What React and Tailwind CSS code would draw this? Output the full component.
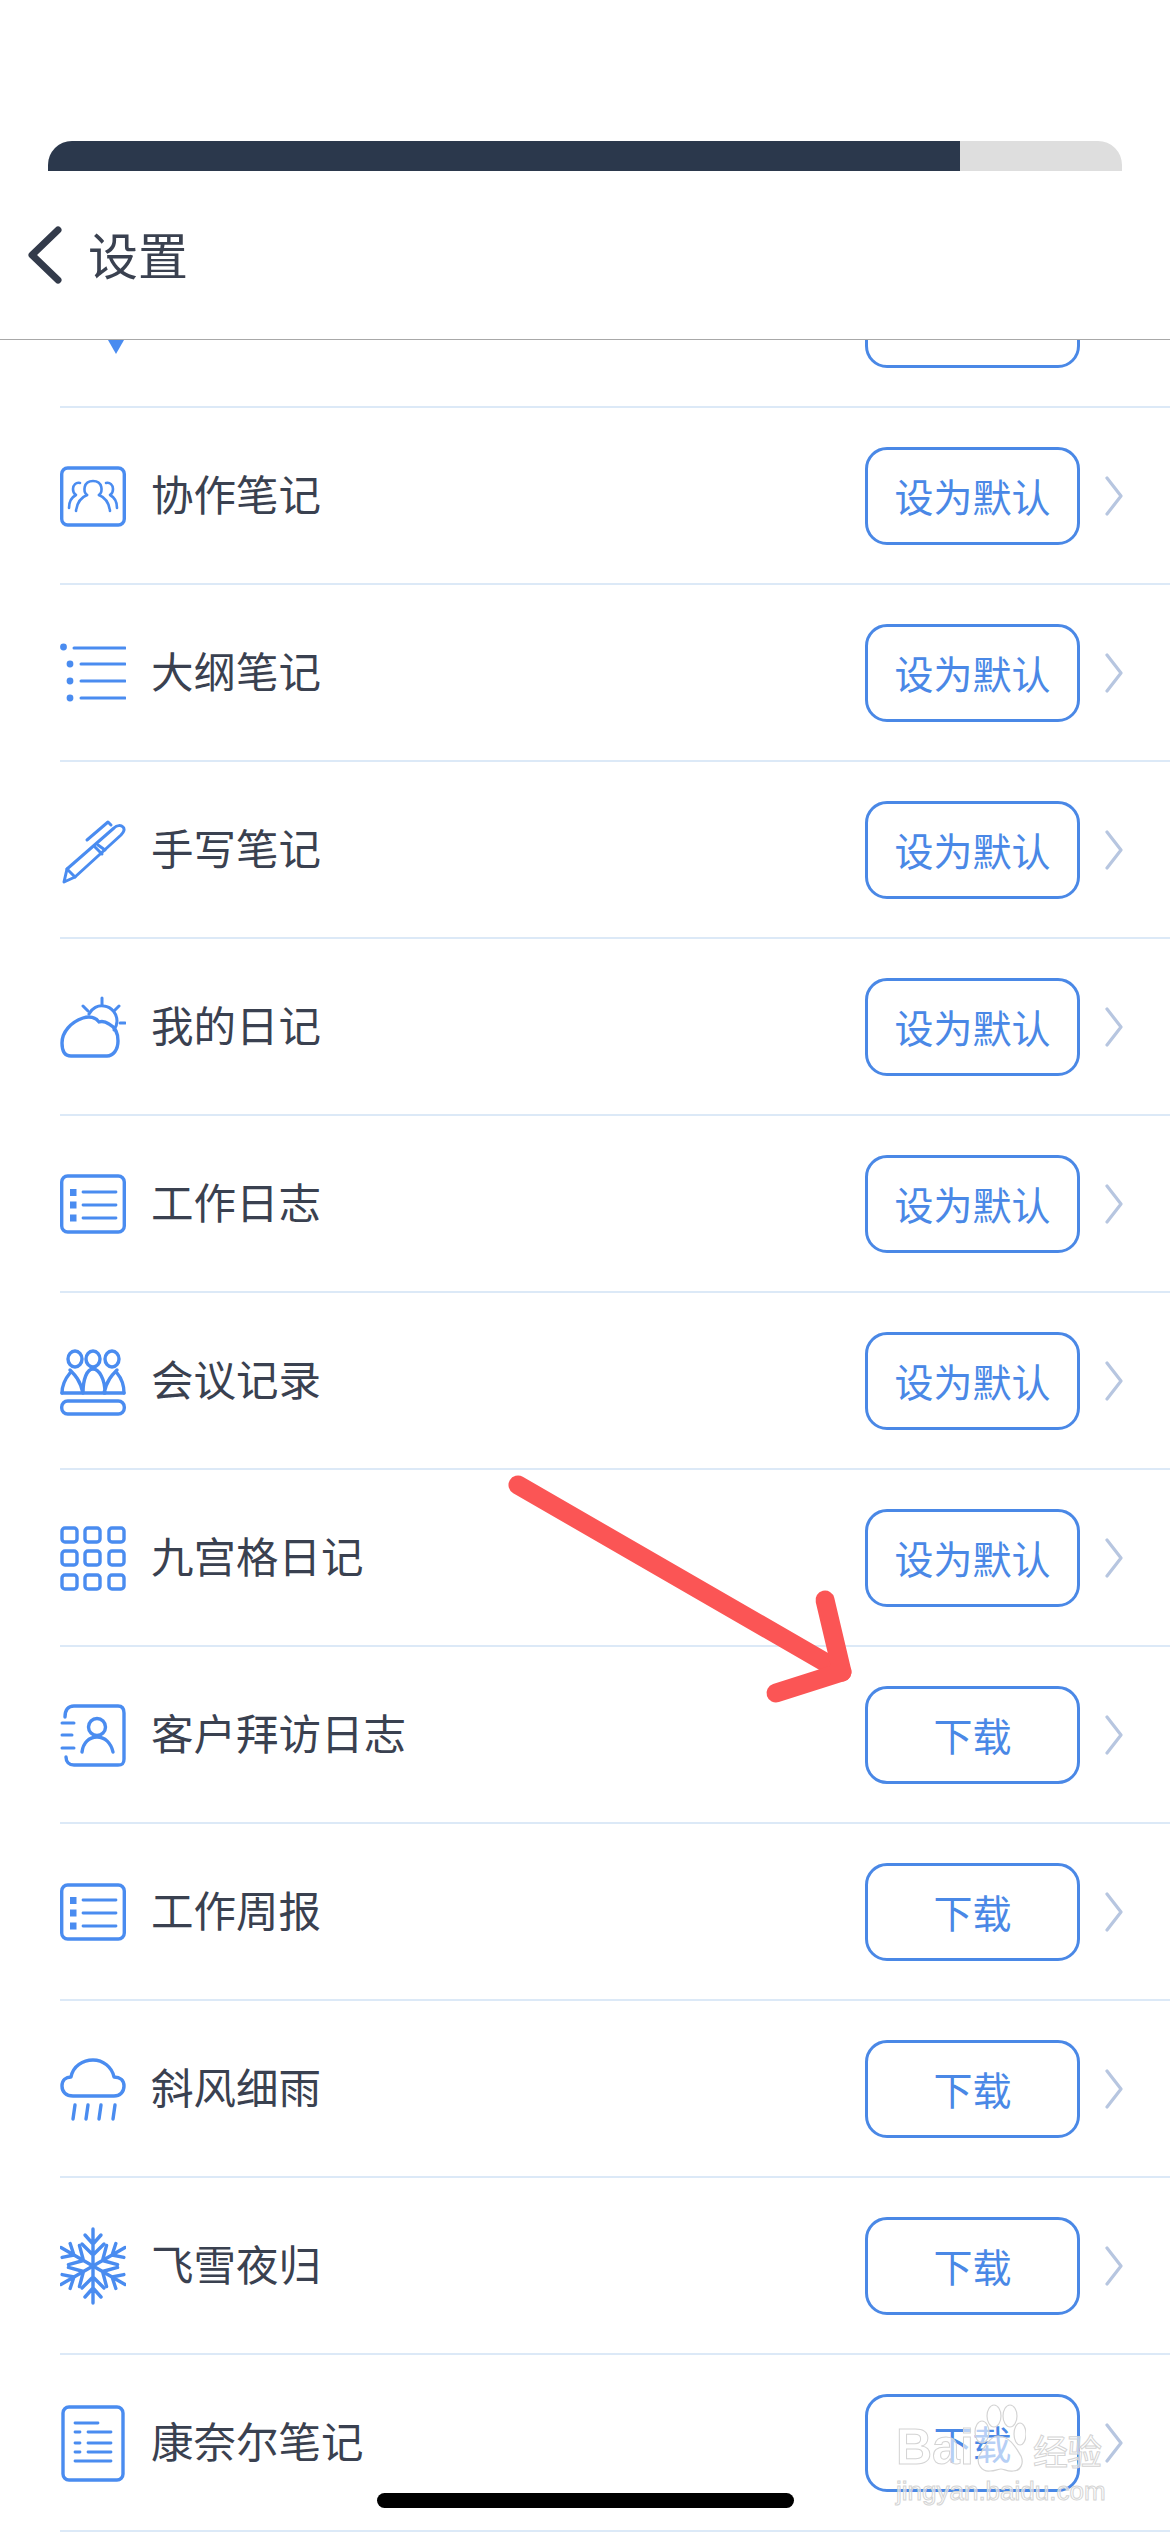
import React from "react";

const BLUE = "#4a8cf0";

const Icon = ({ children }) => (
  <svg viewBox="0 0 66 80" fill="none" stroke={BLUE} strokeWidth="3.4" strokeLinecap="round" strokeLinejoin="round" className="w-[66px] h-[80px] shrink-0">
    {children}
  </svg>
);

const CollabIcon = () => (
  <Icon>
    <rect x="1.7" y="12" width="62.6" height="57" rx="6" />
    <g strokeWidth="2.6">
      <path d="M27 39c-4-3-4-14 6-14s10 11 6 14" />
      <path d="M27 39c-5 2-10 7-11 16M39 39c5 2 10 7 11 16" />
      <path d="M20 27c-4-1-7 2-7 6 0 3 1 5 3 6-4 2-7 7-7 13M46 27c4-1 7 2 7 6 0 3-1 5-3 6 4 2 7 7 7 13" />
    </g>
  </Icon>
);

const OutlineIcon = () => (
  <Icon>
    <g strokeWidth="3">
      <path d="M14 15h51M21 31h44M21 48h44M21 65h44" />
    </g>
    <g fill={BLUE} stroke="none">
      <circle cx="3.5" cy="14" r="3.4" />
      <circle cx="10" cy="31" r="3.4" />
      <circle cx="10" cy="48" r="3.4" />
      <circle cx="10" cy="65" r="3.4" />
    </g>
  </Icon>
);

const PenIcon = () => (
  <Icon>
    <g strokeWidth="3">
      <path d="M4 72l3-13 47-41c3-3 7-3 9-1s1 5-2 8L15 67z" />
      <path d="M7 59l8 8M27 30L48 12l3 3M35 37l7 7M38 35l7 5" />
    </g>
  </Icon>
);

const WeatherIcon = () => (
  <Icon>
    <path d="M11 69C4 69 2 63 2 56c0-11 9-21 21-25 6-2 13-1 16 4 3-1 7 0 10 2 6 3 9 9 9 17 0 9-5 15-11 15z" />
    <path d="M29 27c3-6 9-9 15-8 8 1 13 8 13 15 0 4-1 6-3 9" strokeWidth="3" />
    <path d="M42 11v6M23 19l5 5M59 19l-5 5M60 36h5" strokeWidth="3" />
  </Icon>
);

const ListBoxIcon = ({ top = 12, h = 56 }) => (
  <Icon>
    <rect x="1.7" y={top} width="62.6" height={h} rx="6" />
    <g fill={BLUE} stroke="none">
      <rect x="10" y="25" width="6.5" height="7" />
      <rect x="10" y="37.5" width="6.5" height="7" />
      <rect x="10" y="50.5" width="6.5" height="7" />
    </g>
    <path d="M23 28h33M23 41h33M23 54h33" strokeWidth="2.8" />
  </Icon>
);

const MeetingIcon = () => (
  <Icon>
    <ellipse cx="15" cy="18" rx="7" ry="8" />
    <ellipse cx="33" cy="18" rx="7" ry="8" />
    <ellipse cx="52" cy="18" rx="7" ry="8" />
    <path d="M2 52c0-8 3-14 8-20M10 29c5 5 10 10 13 23M23 52c0-14 4-24 10-24s12 10 12 24M44 52c3-13 8-18 13-23M57 32c5 6 7 12 7 20" />
    <path d="M2 52h62" />
    <rect x="1.7" y="60" width="62.6" height="13" rx="6" />
  </Icon>
);

const GridIcon = () => (
  <Icon>
    {[10, 33, 57].map((y) =>
      [2, 25, 49].map((x) => <rect key={`${x}-${y}`} x={x} y={y} width="15" height="14" rx="3" />)
    )}
  </Icon>
);

const ClientIcon = () => (
  <Icon>
    <path d="M5 22c0-7 3-11 9-11h44c5 0 6 3 6 7v46c0 4-1 6-6 6H14c-5 0-8-3-8-8" />
    <path d="M2 28h12M2 40h10M2 53h12" strokeWidth="3" />
    <ellipse cx="37" cy="32" rx="8.5" ry="8.5" />
    <path d="M22 57c1-9 7-15 15-15s14 6 16 15" />
  </Icon>
);

const RainIcon = () => (
  <Icon>
    <path d="M13 47C6 47 2 43 2 37c0-6 4-9 9-9 2-11 12-17 22-17s19 7 21 17c6 0 10 3 10 9s-4 10-10 10z" />
    <path d="M15 56l-2 14M28 56l-2 14M41 56l-2 14M55 56l-2 14" />
  </Icon>
);

const SnowIcon = () => (
  <Icon>
    <g strokeWidth="3.4">
      {[0, 60, 120, 180, 240, 300].map((a) => (
        <g key={a} transform={`rotate(${a} 33 40)`}>
          <path d="M33 40V3M25 9l8 9 8-9M22 18l11 11 11-11" />
        </g>
      ))}
    </g>
  </Icon>
);

const DocIcon = () => (
  <Icon>
    <rect x="3" y="4" width="60" height="73" rx="6" />
    <path d="M15 20h23M15 29h5M28 29h23M15 40h5M28 40h23M15 49h5M28 49h23M15 58h36" strokeWidth="2.8" />
  </Icon>
);

const Chevron = () => (
  <svg viewBox="0 0 18 40" fill="none" stroke="#b7c6e0" strokeWidth="3.2" strokeLinecap="round" strokeLinejoin="round" className="w-[18px] h-[40px] shrink-0 ml-[25px] mr-[47px]">
    <path d="M2 2l14 18L2 38" />
  </svg>
);

const rows = [
  { label: "协作笔记", icon: <CollabIcon />, action: "设为默认" },
  { label: "大纲笔记", icon: <OutlineIcon />, action: "设为默认" },
  { label: "手写笔记", icon: <PenIcon />, action: "设为默认" },
  { label: "我的日记", icon: <WeatherIcon />, action: "设为默认" },
  { label: "工作日志", icon: <ListBoxIcon />, action: "设为默认" },
  { label: "会议记录", icon: <MeetingIcon />, action: "设为默认" },
  { label: "九宫格日记", icon: <GridIcon />, action: "设为默认" },
  { label: "客户拜访日志", icon: <ClientIcon />, action: "下载" },
  { label: "工作周报", icon: <ListBoxIcon top={13} h={54} />, action: "下载" },
  { label: "斜风细雨", icon: <RainIcon />, action: "下载" },
  { label: "飞雪夜归", icon: <SnowIcon />, action: "下载" },
  { label: "康奈尔笔记", icon: <DocIcon />, action: "下载" },
];

const ActionButton = ({ children }) => (
  <button type="button" className="ml-auto w-[215px] h-[98px] shrink-0 rounded-[22px] border-[3px] border-[#4a88e6] bg-white text-[39px] text-[#4a88e6] flex items-center justify-center">
    {children}
  </button>
);

const Watermark = () => (
  <div className="absolute left-[896px] top-[2404px] w-[214px] h-[104px] text-white/60 [-webkit-text-stroke:1px_#d4d4d4]">
    <div className="flex items-end h-[72px]">
      <span className="font-['Liberation_Sans'] font-bold text-[50px] leading-[58px] w-[76px]">Bai</span>
      <svg viewBox="0 0 54 72" fill="#ffffff" fillOpacity="0.6" stroke="#d4d4d4" strokeWidth="1.2" className="w-[54px] h-[72px] shrink-0">
        <ellipse cx="10" cy="28" rx="7" ry="11" />
        <ellipse cx="22" cy="12" rx="7" ry="11" />
        <ellipse cx="38" cy="12" rx="7" ry="11" />
        <ellipse cx="48" cy="30" rx="6" ry="11" />
        <path d="M26 32c-8 0-14 12-19 20-3 8 3 16 11 15 5 0 8-2 11-2s7 3 12 2c8 0 11-8 8-15-5-8-11-20-23-20z" />
      </svg>
      <span className="text-[35px] leading-[52px] ml-[7px] tracking-[-1px] whitespace-nowrap">经验</span>
    </div>
    <div className="font-['Liberation_Sans'] text-[26px] leading-[30px] whitespace-nowrap">jingyan.baidu.com</div>
  </div>
);

export default function App() {
  return (
    <div className="relative w-[1170px] h-[2532px] overflow-hidden bg-white font-['Noto_Sans_CJK_SC','Noto_Sans',sans-serif]">
      {/* header */}
      <header className="h-[340px] border-b border-[#a8a8a8] bg-white pt-[141px]">
        <div className="mx-[48px] h-[30px] rounded-t-[24px] overflow-hidden bg-[#dedede]">
          <div className="w-[912px] h-full bg-[#2b384c]" />
        </div>
        <div className="flex items-center h-[113px] pl-[28px] mt-[27px]">
          <svg viewBox="0 0 34 58" fill="none" stroke="#333b4b" strokeWidth="7" strokeLinecap="round" strokeLinejoin="round" className="w-[34px] h-[58px]">
            <path d="M30 4L4 29l26 25" />
          </svg>
          <span className="ml-[26px] text-[50px] leading-none text-[#3a4150] -translate-y-[2px]">设置</span>
        </div>
      </header>

      {/* row scrolled under the header */}
      <div className="ml-[60px] h-[68px] border-b-2 border-[#dce9f7] overflow-hidden flex items-end pb-[38px] pr-[90px]">
        <svg viewBox="0 0 18 14" className="w-[18px] h-[14px] self-start ml-[47px]" fill={BLUE}>
          <path d="M1 0h16L9 14z" />
        </svg>
        <ActionButton>设为默认</ActionButton>
      </div>

      {rows.map((row) => (
        <div key={row.label} className="ml-[60px] h-[177px] border-b-2 border-[#dce9f7] flex items-center">
          {row.icon}
          <span className="ml-[25px] text-[42.5px] leading-none text-[#3a4150] -translate-y-[2px]">{row.label}</span>
          <ActionButton>{row.action}</ActionButton>
          <Chevron />
        </div>
      ))}

      {/* annotation arrow */}
      <svg viewBox="0 0 1170 2532" fill="none" stroke="#fb5555" strokeLinecap="round" strokeLinejoin="round" className="absolute inset-0 w-[1170px] h-[2532px] pointer-events-none">
        <path d="M518 1485L842 1672" strokeWidth="19" />
        <path d="M825 1600L842 1672L776 1693" strokeWidth="19" />
      </svg>

      <Watermark />

      {/* home indicator */}
      <div className="absolute left-[377px] top-[2493px] w-[417px] h-[15px] rounded-full bg-black" />
    </div>
  );
}
